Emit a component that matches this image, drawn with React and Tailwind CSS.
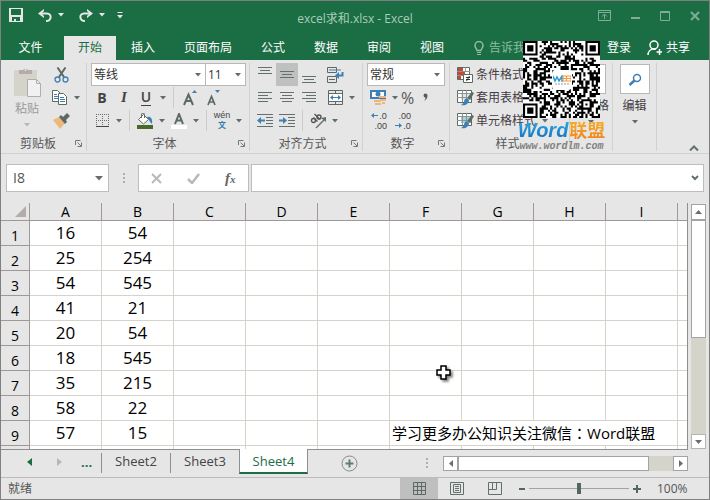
import React, { useState } from 'react';

const columns = ['A', 'B', 'C', 'D', 'E', 'F', 'G', 'H', 'I'];

const rows = [
    [16, 54],
    [25, 254],
    [54, 545],
    [41, 21],
    [20, 54],
    [18, 545],
    [35, 215],
    [58, 22],
    [57, 15],
];

const menuTabs = ['开始', '插入', '页面布局', '公式', '数据', '审阅', '视图'];

const QR_SIZE = 37;

// finder or alignment square: dark ring, light ring, dark core
const ring = (x, y, cx, cy, radius) => {
    const d = Math.max(Math.abs(x - cx), Math.abs(y - cy));
    if (d > radius + 1 || (radius === 2 && d > 2)) return null;
    if (radius === 3) return d === 3 || d <= 1;
    return d === 2 || d === 0;
};

const buildQr = () => {
    let seed = 20165;
    const cells = [];
    for (let y = 0; y < QR_SIZE; y++) {
        for (let x = 0; x < QR_SIZE; x++) {
            seed = (seed * 1103515245 + 12345) % 2147483648;
            const random = seed / 2147483648 > 0.48;
            const fixed = ring(x, y, 3, 3, 3) ?? ring(x, y, 33, 3, 3) ?? ring(x, y, 3, 33, 3) ?? ring(x, y, 30, 30, 2);
            if (fixed ?? random) cells.push(`M${x} ${y}h1v1h-1z`);
        }
    }
    return cells.join('');
};

const qrPath = buildQr();

const Svg = ({ w, h, children, className = '' }) => (
    <svg width={w} height={h} viewBox={`0 0 ${w} ${h}`} fill="none" className={`shrink-0 ${className}`} aria-hidden="true">
        {children}
    </svg>
);

const Caret = ({ className = 'text-[#5f6f68]' }) => (
    <Svg w={6} h={4} className={className}>
        <path d="M0 0h6L3 3.5z" fill="currentColor" />
    </Svg>
);

const Tool = ({ label, className = 'w-[22px]', children }) => (
    <button type="button" aria-label={label} className={`flex h-[23px] shrink-0 items-center justify-center hover:bg-[#cfcfcf] ${className}`}>
        {children}
    </button>
);

const Divider = () => <span className="ml-1 h-[21px] w-px shrink-0 bg-[#cdcdc8]" />;

const Launcher = ({ label }) => (
    <button type="button" aria-label={label}>
        <Svg w={7} h={7}>
            <path d="M0.5 5V0.5H5.5M2.5 2.5L6 6M6.5 2.5V6.5H2.5" stroke="#777" />
        </Svg>
    </button>
);

const Group = ({ title, className, children, launcher = true }) => (
    <section className={`flex shrink-0 flex-col border-r border-[#d2d2cc] ${className}`}>
        <div className="h-[69px]">{children}</div>
        <div className="flex h-[19px] items-center pt-1 pr-1">
            <span className="flex-1 text-center leading-4 text-[#565656]">{title}</span>
            {launcher && <Launcher label={`${title}设置`} />}
        </div>
    </section>
);

const Select = ({ label, className, options }) => (
    <label className={`relative block h-[23px] shrink-0 border border-[#b8b8b8] bg-white ${className}`}>
        <select aria-label={label} className="h-full w-full appearance-none bg-white pl-[2px] text-[12px] leading-4 text-[#333] outline-none">
            {options.map(o => <option key={o}>{o}</option>)}
        </select>
        <span className="pointer-events-none absolute inset-y-0 right-1 flex items-center"><Caret /></span>
    </label>
);

// each line of a 14px paragraph glyph as [x, y, length]
const Lines = ({ rows: list, h = 13 }) => (
    <Svg w={14} h={h}>
        {list.map(([x, y, len]) => <rect key={y} x={x} y={y} width={len} height="1" fill="#62716b" />)}
    </Svg>
);

const Clipboard = () => (
    <Group title="剪贴板" className="w-[86px]">
        <div className="flex pl-2">
            <button type="button" className="flex w-9 flex-col items-center text-[#999]">
                <Svg w={30} h={32} className="mt-1">
                    <path d="M2 3h23v26H2z" fill="#d4d4ca" />
                    <path d="M7 7V3h4a3 3 0 0 1 5 0h4v4z" fill="#b5abab" />
                    <circle cx="13.5" cy="3" r="1" fill="#e6e6e6" />
                    <path d="M15.500 12.500h9l4 4v13h-13z" fill="#f1f1f1" stroke="#b5abab" />
                    <path d="M24.500 12.500v4h4" stroke="#b5abab" />
                </Svg>
                <span className="leading-5">粘贴</span>
                <Caret className="mt-1 text-[#b8b8b8]" />
            </button>
            <div className="pl-1">
                <Tool label="剪切" className="w-6">
                    <Svg w={15} h={16}>
                        <path d="M3.500 0.500L10 10M11.500 0.500L5 10" stroke="#5c6a64" strokeWidth="2" />
                        <circle cx="3.500" cy="12.500" r="2.500" stroke="#3f7fb5" strokeWidth="1.300" />
                        <circle cx="11.500" cy="12.500" r="2.500" stroke="#3f7fb5" strokeWidth="1.300" />
                    </Svg>
                </Tool>
                <Tool label="复制" className="w-8 gap-[6px]">
                    <Svg w={17} h={15}>
                        <path d="M1.500 0.500h5l3 3v8h-8z" fill="#fff" stroke="#5c6a64" />
                        <path d="M3 4.500h3M3 6.500h4M3 8.500h4" stroke="#3f7fb5" />
                        <path d="M7.500 3.500h5l3 3v8h-8z" fill="#fff" stroke="#5c6a64" />
                        <path d="M9 7.500h4M9 9.500h5M9 11.500h5" stroke="#3f7fb5" />
                    </Svg>
                    <Caret />
                </Tool>
                <Tool label="格式刷" className="w-6">
                    <Svg w={17} h={16}>
                        <path d="M0 7l6-3 6 6-5 6z" fill="#eeb878" />
                        <path d="M6 4l2-2 2 2 4-4 3 3-4 4 1 2-2 2z" fill="#5c6a64" />
                    </Svg>
                </Tool>
            </div>
        </div>
    </Group>
);

const FontGroup = () => (
    <Group title="字体" className="w-[163px] pl-1">
        <div className="flex">
            <Select label="字体" className="w-[115px]" options={['等线', '宋体', '黑体']} />
            <Select label="字号" className="-ml-px w-[41px]" options={['11', '12', '14']} />
        </div>
        <div className="flex items-center text-[14px] text-[#444]">
            <Tool label="加粗"><b>B</b></Tool>
            <Tool label="倾斜"><i className="font-['Liberation_Serif'] text-[15px] font-bold">I</i></Tool>
            <Tool label="下划线"><span className="border-b border-[#444] font-semibold leading-4">U</span></Tool>
            <Tool label="下划线样式" className="w-3"><Caret /></Tool>
            <Divider />
            <Tool label="增大字号" className="ml-1 w-6">
                <Svg w={14} h={16}>
                    <path d="M1 15L5.500 4.500L10 15M2.500 11h6" stroke="#5c6a64" strokeWidth="2" />
                    <path d="M9 3h5L11.500 0z" fill="#3f7fb5" />
                </Svg>
            </Tool>
            <Tool label="减小字号">
                <Svg w={13} h={16}>
                    <path d="M1 15L4.500 6.500L8 15M2.500 12h4" stroke="#5c6a64" strokeWidth="1.700" />
                    <path d="M8 0h5l-2.500 3z" fill="#3f7fb5" />
                </Svg>
            </Tool>
        </div>
        <div className="flex items-center">
            <Tool label="边框">
                <Svg w={13} h={13}>
                    <path d="M0 0.500h13M0 6.500h13M0.500 0v13M6.500 0v13M12.500 0v13" stroke="#6e6e6e" strokeDasharray="1 1" />
                    <path d="M0 12.500h13" stroke="#444" />
                </Svg>
            </Tool>
            <Tool label="边框样式" className="w-3"><Caret /></Tool>
            <Divider />
            <Tool label="填充颜色" className="ml-1 w-[22px]">
                <Svg w={16} h={16}>
                    <path d="M1.500 6.500l5-5 5 5-5 4.500z" fill="#fff" stroke="#5c6a64" />
                    <path d="M4.500 5V1.500a1.500 1.500 0 0 1 3 0V5" stroke="#5c6a64" />
                    <path d="M10 4c3-1 6 1 5 7-1-1-2-2-3-4z" fill="#3f7fb5" />
                    <path d="M0 12h16v4H0z" fill="#49682e" />
                </Svg>
            </Tool>
            <Tool label="填充颜色选择" className="w-3"><Caret /></Tool>
            <Tool label="字体颜色">
                <Svg w={16} h={16}>
                    <path d="M4 11L8 1L12 11M5.500 7.500h5" stroke="#5c6a64" strokeWidth="2" />
                    <path d="M0 12h16v4H0z" fill="#fff" />
                </Svg>
            </Tool>
            <Tool label="字体颜色选择" className="w-3"><Caret /></Tool>
            <Divider />
            <Tool label="拼音" className="ml-1 w-[22px] flex-col font-['Liberation_Sans','Noto_Sans_CJK_SC'] text-[9px] text-[#444]">
                <span className="leading-[10px]">wén</span>
                <span className="text-[8px] font-bold leading-[12px] text-[#2f7fb0]">文</span>
            </Tool>
            <Tool label="拼音选项" className="w-3"><Caret /></Tool>
        </div>
    </Group>
);

const AlignGroup = () => (
    <Group title="对齐方式" className="w-[113px] pl-1">
        <div className="flex">
            <Tool label="顶端对齐"><Lines rows={[[0, 1, 14], [2, 4, 10], [0, 7, 14]]} h={18} /></Tool>
            <Tool label="垂直居中" className="w-[22px] bg-[#c0c0c0]"><Lines rows={[[0, 1, 14], [2, 4, 10], [0, 7, 14]]} h={9} /></Tool>
            <Tool label="底端对齐"><Lines rows={[[0, 9, 14], [2, 12, 10], [0, 15, 14]]} h={16} /></Tool>
            <Tool label="自动换行" className="ml-1 w-[22px]">
                <Svg w={17} h={16}>
                    <path d="M0.500 0.500h9v5h-9zM0.500 9.500h9v6h-9zM2 12.500h6" stroke="#5c6a64" />
                    <path d="M2 3h12" stroke="#3f7fb5" />
                    <path d="M15.500 5v3.500H10" stroke="#3f7fb5" strokeWidth="2" />
                    <path d="M12 5v7L8 8.500z" fill="#3f7fb5" />
                </Svg>
            </Tool>
        </div>
        <div className="flex">
            <Tool label="左对齐"><Lines rows={[[0, 1, 14], [0, 4, 10], [0, 7, 14], [0, 10, 10]]} /></Tool>
            <Tool label="居中"><Lines rows={[[0, 1, 14], [2, 4, 10], [0, 7, 14], [2, 10, 10]]} /></Tool>
            <Tool label="右对齐"><Lines rows={[[0, 1, 14], [4, 4, 10], [0, 7, 14], [4, 10, 10]]} /></Tool>
            <Tool label="合并后居中" className="ml-1 w-[22px]">
                <Svg w={15} h={15}>
                    <path d="M0.500 0.500h14v14h-14zM0 3.500h15M0 11.500h15M7.500 0v3M7.500 12v3" stroke="#5c6a64" />
                    <path d="M1 4h13v7H1z" fill="#fff" />
                    <path d="M3 7.500h9" stroke="#3f7fb5" />
                    <path d="M5 5v5L2 7.500zM10 5v5l3-2.500z" fill="#3f7fb5" />
                </Svg>
            </Tool>
            <Tool label="合并选项" className="w-3"><Caret /></Tool>
        </div>
        <div className="flex items-center">
            <Tool label="减少缩进量">
                <Svg w={16} h={13}>
                    <path d="M0 0.500h16M9 3.500h7M9 6.500h7M9 9.500h7M0 12.500h16" stroke="#62716b" />
                    <path d="M3 6.500h5" stroke="#3f7fb5" strokeWidth="2" />
                    <path d="M4 3v7L0 6.500z" fill="#3f7fb5" />
                </Svg>
            </Tool>
            <Tool label="增加缩进量">
                <Svg w={16} h={13}>
                    <path d="M0 0.500h16M9 3.500h7M9 6.500h7M9 9.500h7M0 12.500h16" stroke="#62716b" />
                    <path d="M0 6.500h5" stroke="#3f7fb5" strokeWidth="2" />
                    <path d="M4 3v7l4-3.500z" fill="#3f7fb5" />
                </Svg>
            </Tool>
            <Divider />
            <Tool label="方向" className="ml-1 w-[22px]">
                <Svg w={17} h={16}>
                    <g stroke="#555" strokeWidth="1.400">
                        <circle cx="3.500" cy="7.500" r="2" />
                        <path d="M3.500 4.500l4 4M4.500 1l5.500 5.500" />
                        <circle cx="9" cy="4" r="2" />
                        <path d="M6 15l8-8" stroke="#62716b" />
                    </g>
                    <path d="M16 4v5l-5-4z" fill="#62716b" />
                </Svg>
            </Tool>
            <Tool label="方向选项" className="w-3"><Caret /></Tool>
        </div>
    </Group>
);

const NumberGroup = () => (
    <Group title="数字" className="w-[87px] pl-1">
        <Select label="数字格式" className="w-[78px]" options={['常规', '数值', '货币']} />
        <div className="flex items-center">
            <Tool label="会计数字格式">
                <Svg w={17} h={17}>
                    <path d="M0 1h16v9H0z" fill="#3f7fb5" />
                    <path d="M2 3h12v5H2z" fill="#fff" />
                    <circle cx="8" cy="5" r="2.500" fill="#3f7fb5" />
                    <path d="M9 7h7v2H9zM10 10h6v2h-6zM4 11h7v2H4zM5 14h6v2H5zM12 13h3v2h-3z" fill="#f0b57c" />
                </Svg>
            </Tool>
            <Tool label="货币选项" className="w-3"><Caret /></Tool>
            <Tool label="百分比" className="text-[16px] text-[#555]">%</Tool>
            <Tool label="千位分隔">
                <Svg w={5} h={9}><path d="M0.500 2.500a2 2 0 1 1 4 0c0 2.500-1 4-3.500 5.500 1-1.500 1.500-2.500 1.500-3.500a2 2 0 0 1-2-2z" fill="#5d5763" /></Svg>
            </Tool>
        </div>
        <div className="flex gap-2 pl-1 font-['Liberation_Sans'] text-[9px] leading-[10px] text-[#444]">
            <Tool label="增加小数位" className="w-4 flex-col">
                <span className="flex items-center">
                    <Svg w={8} h={5}><path d="M2 2.500h5" stroke="#3f7fb5" /><path d="M3 0v5L0 2.500z" fill="#3f7fb5" /></Svg>.0
                </span>
                <span className="self-end">.00</span>
            </Tool>
            <Tool label="减少小数位" className="w-4 flex-col">
                <span className="self-end">.00</span>
                <span className="flex items-center">
                    <Svg w={8} h={5}><path d="M0 2.500h5" stroke="#3f7fb5" /><path d="M4 0v5l3-2.500z" fill="#3f7fb5" /></Svg>.0
                </span>
            </Tool>
        </div>
    </Group>
);

const TableIcon = ({ fill }) => (
    <Svg w={17} h={16}>
        <path d="M0.500 0.500h14v12h-14z" fill="#fff" stroke="#5c6a64" />
        <path d="M4 4h10v6H4z" fill={fill} />
        <path d="M0 3.500h15M0 7.500h10M5.500 0v12M9.500 0v8" stroke="#8a9691" />
        <path d="M10 8l5-6 2 1-4 7z" fill="#5c6a64" />
        <path d="M4 15c4 1 8-1 8-5l-2-2c-4 1-2 5-6 7z" fill="#3f7fb5" />
    </Svg>
);

const StylesGroup = () => (
    <Group title="样式" className="w-[120px]" launcher={false}>
        <button type="button" className="flex h-[23px] items-center gap-[3px] pl-[7px]">
            <Svg w={16} h={16}>
                <path d="M0.500 0.500h12v12h-12z" fill="#fff" stroke="#5c6a64" />
                <path d="M1 1h5v3H1zM1 9h3v3H1zM1 5h7v3H1z" fill="#c64a31" />
                <path d="M0 4.500h13M0 8.500h6M8.500 0v5" stroke="#8a9691" />
                <path d="M6.500 7.500h9v8h-9z" fill="#fff" stroke="#5c6a64" />
                <path d="M9 10.500h4M9 12.500h4M12.500 9L9.500 14" stroke="#333" />
            </Svg>
            条件格式
        </button>
        <button type="button" className="flex h-[23px] items-center gap-[2px] pl-[7px]"><TableIcon fill="#e4e4e4" />套用表格</button>
        <button type="button" className="flex h-[23px] items-center gap-[2px] pl-[7px]">
            <TableIcon fill="#a9d0d4" />单元格样式<span className="pl-1"><Caret /></span>
        </button>
    </Group>
);

const BigButton = ({ label, children }) => (
    <button type="button" className="flex w-full flex-col items-center">
        <span className="mt-px flex h-[30px] w-[30px] items-center justify-center border border-[#b8b8b8] bg-white">{children}</span>
        <span className="mt-[2px] leading-5">{label}</span>
        <span className="mt-1"><Caret /></span>
    </button>
);

const Ribbon = () => (
    <div className="flex shrink-0 overflow-hidden border-b border-[#d2d2cc] bg-[#e6e6e6] pt-[3px] pb-[2px] text-[12px] text-[#443c44]">
        <Clipboard />
        <FontGroup />
        <AlignGroup />
        <NumberGroup />
        <StylesGroup />
        <Group title="" className="w-[43px]" launcher={false}>
            <BigButton label="单元格">
                <Svg w={14} h={12}><path d="M0.500 0.500h13v11h-13zM0 4.500h14M5.500 0v12" stroke="#5c6a64" /></Svg>
            </BigButton>
        </Group>
        <Group title="" className="w-[44px]" launcher={false}>
            <BigButton label="编辑">
                <Svg w={14} h={13}>
                    <circle cx="9" cy="5" r="3.500" stroke="#3f7fb5" strokeWidth="1.500" />
                    <path d="M6.500 7.500L1.500 12" stroke="#3f7fb5" strokeWidth="2.500" />
                </Svg>
            </BigButton>
        </Group>
        <div className="flex flex-1 items-end justify-end pr-[10px]">
            <button type="button" aria-label="折叠功能区">
                <Svg w={10} h={6}><path d="M1 5.500L5 1.500L9 5.500" stroke="#62716b" strokeWidth="2" /></Svg>
            </button>
        </div>
    </div>
);

const TitleBar = () => (
    <header className="relative flex h-[35px] shrink-0 items-center justify-between bg-[#1b6e44] pr-[9px] pl-2 text-[#e6e6e6]">
        <div className="flex items-center pb-[7px]">
            <button type="button" aria-label="保存">
                <Svg w={14} h={14}>
                    <path d="M0 0h14v14H0z" fill="#e6e6e6" />
                    <path d="M2 1h10v6H2zM3 9h8v4H3z" fill="#1b6e44" />
                    <path d="M5 11h2v2H5z" fill="#e6e6e6" />
                </Svg>
            </button>
            <button type="button" aria-label="撤消" className="ml-[15px] flex items-center gap-[6px]">
                <Svg w={14} h={13}>
                    <path d="M2 4.500h7c5 0 5 7.500-1 7.500" stroke="currentColor" strokeWidth="2" />
                    <path d="M6 0v2L3.500 4.500L6 7v2L0 4.500z" fill="currentColor" />
                </Svg>
                <Caret className="text-[#e6e6e6]" />
            </button>
            <button type="button" aria-label="恢复" className="ml-[15px] flex items-center gap-[6px]">
                <Svg w={14} h={13}>
                    <path d="M12 4.500H5c-5 0-5 7.500 1 7.500" stroke="currentColor" strokeWidth="2" />
                    <path d="M8 0v2l2.500 2.500L8 7v2l6-4.500z" fill="currentColor" />
                </Svg>
                <Caret className="text-[#e6e6e6]" />
            </button>
            <button type="button" aria-label="自定义快速访问工具栏" className="ml-3">
                <Svg w={6} h={7}><path d="M0.500 0.500h5" stroke="currentColor" /><path d="M0 3h6L3 6.500z" fill="currentColor" /></Svg>
            </button>
        </div>
        <h1 className="pointer-events-none absolute inset-x-0 text-center text-[12px] leading-5 text-[#a9cdb9]">excel求和.xlsx - Excel</h1>
        <div className="flex items-center gap-5 pb-[6px] text-[#7fae94]">
            <button type="button" aria-label="功能区显示选项">
                <Svg w={13} h={11}><path d="M0.500 0.500h12v10h-12zM1 2.500h11M6.500 4v5M4 6.500L6.500 4L9 6.500" stroke="currentColor" /></Svg>
            </button>
            <button type="button" aria-label="最小化"><Svg w={9} h={10}><path d="M0 7h9" stroke="currentColor" strokeWidth="2" /></Svg></button>
            <button type="button" aria-label="最大化"><Svg w={10} h={10}><path d="M0.500 0.500h9v9h-9zM0 1.500h10" stroke="currentColor" /></Svg></button>
            <button type="button" aria-label="关闭"><Svg w={10} h={10}><path d="M1 1l8 8M9 1L1 9" stroke="currentColor" strokeWidth="2" /></Svg></button>
        </div>
    </header>
);

const MenuBar = () => {
    const [active, setActive] = useState('开始');
    return (
        <nav className="flex h-6 shrink-0 items-stretch bg-[#1b6e44] text-[12px] leading-5 whitespace-nowrap text-white">
            <button type="button" className="w-[63px] pr-1">文件</button>
            <div className="flex gap-px">
                {menuTabs.map(tab => (
                    <button
                        key={tab}
                        type="button"
                        onClick={() => setActive(tab)}
                        className={`px-[14px] ${active === tab ? 'bg-[#e6e6e6] text-[#1b6e44]' : ''}`}
                    >
                        {tab}
                    </button>
                ))}
            </div>
            <button type="button" className="ml-4 flex items-center gap-[5px] text-[#8fbda3]">
                <Svg w={10} h={14}>
                    <path d="M3 9.500C3 8 1 7 1 4.500a4 4 0 0 1 8 0C9 7 7 8 7 9.500z" stroke="currentColor" strokeWidth="1.500" />
                    <path d="M3 11.500h4M3 13.500h4" stroke="currentColor" />
                </Svg>
                告诉我
            </button>
            <div className="flex flex-1 items-center justify-end gap-4 pr-[19px]">
                <button type="button">登录</button>
                <button type="button" className="flex items-center gap-1">
                    <Svg w={15} h={16}>
                        <circle cx="7" cy="5" r="4" stroke="currentColor" strokeWidth="1.500" />
                        <path d="M1 15c0-3 2-6 6-6h2M12.500 9v6M9.500 12h6" stroke="currentColor" strokeWidth="1.500" />
                    </Svg>
                    共享
                </button>
            </div>
        </nav>
    );
};

const Dots = () => (
    <Svg w={2} h={11}><path d="M0 0h2v2H0zM0 4h2v2H0zM0 8h2v2H0z" fill="#b5abab" /></Svg>
);

const FormulaBar = () => (
    <div className="flex shrink-0 items-center px-[5px] pt-[10px] pb-[11px]">
        <label className="flex h-7 w-[103px] items-center border border-[#bdbdbd] bg-white pr-[5px]">
            <input aria-label="名称框" defaultValue="I8" className="min-w-0 flex-1 pl-[6px] text-[14px] leading-5 text-[#555] outline-none" />
            <Svg w={8} h={5}><path d="M0 0h8L4 4.500z" fill="#6b6b6b" /></Svg>
        </label>
        <span className="flex w-[29px] justify-center"><Dots /></span>
        <div className="flex h-7 w-[111px] items-center justify-around border border-[#bdbdbd] bg-white">
            <button type="button" aria-label="取消"><Svg w={11} h={11}><path d="M1 1l9 9M10 1l-9 9" stroke="#b9b9b9" strokeWidth="2" /></Svg></button>
            <button type="button" aria-label="输入"><Svg w={13} h={11}><path d="M1 6l4 4 7-9" stroke="#b9b9b9" strokeWidth="2.500" /></Svg></button>
            <button type="button" aria-label="插入函数" className="font-['Liberation_Serif'] text-[15px] leading-5 font-bold text-[#666] italic">
                f<span className="text-[11px]">x</span>
            </button>
        </div>
        <label className="ml-[2px] flex h-7 flex-1 items-center border border-[#bdbdbd] bg-white pr-1">
            <input aria-label="编辑栏" className="min-w-0 flex-1 px-2 text-[14px] outline-none" />
            <Svg w={8} h={6}><path d="M1 1l3 3 3-3" stroke="#62716b" strokeWidth="2" /></Svg>
        </label>
    </div>
);

const Sheet = () => (
    <div className="min-w-0 flex-1 overflow-hidden border-r border-[#8f8f8f]">
        <table className="w-full table-fixed border-separate border-spacing-0 text-center">
            <colgroup>
                <col className="w-[29px]" />
                {columns.map(c => <col key={c} className="w-[72px]" />)}
                <col />
            </colgroup>
            <thead>
                <tr className="h-[18px] bg-[#e6e6e6] text-[14px] leading-4 text-black">
                    <th aria-label="全选" className="border-r border-b border-[#a09898] p-0">
                        <Svg w={11} h={11} className="ml-[14px]"><path d="M11 0v11H0z" fill="#b5abab" /></Svg>
                    </th>
                    {columns.map(c => (
                        <th key={c} scope="col" className="border-r border-b border-[#a09898] p-0 font-normal">{c}</th>
                    ))}
                    <td className="border-b border-[#a09898] p-0" />
                </tr>
            </thead>
            <tbody className="text-[17px] leading-5 text-black">
                {rows.map(([a, b], i) => (
                    <tr key={i} className="h-[25px]">
                        <th scope="row" className="border-r border-b border-[#a09898] bg-[#e6e6e6] p-0 pt-[5px] text-[14px] leading-4 font-normal">{i + 1}</th>
                        <td className="border-r border-b border-[#d4d4ca] p-0">{a}</td>
                        <td className="border-r border-b border-[#d4d4ca] p-0">{b}</td>
                        {columns.slice(2, 5).map(c => <td key={c} className="border-r border-b border-[#d4d4ca] p-0" />)}
                        {i === 8 ? (
                            <td colSpan={4} className="border-r border-b border-[#d4d4ca] p-0 pl-[2px] text-left text-[15px] whitespace-nowrap">
                                学习更多办公知识关注微信<span className="font-['Noto_Sans_CJK_TC']">：</span>Word联盟
                            </td>
                        ) : (
                            columns.slice(5).map(c => <td key={c} className="border-r border-b border-[#d4d4ca] p-0" />)
                        )}
                        <td className="border-b border-[#d4d4ca] p-0" />
                    </tr>
                ))}
                <tr className="h-[25px]">
                    <th className="border-r border-[#a09898] bg-[#e6e6e6] p-0" />
                    {columns.map(c => <td key={c} className="border-r border-[#d4d4ca] p-0" />)}
                    <td className="p-0" />
                </tr>
            </tbody>
        </table>
    </div>
);

const VerticalScroll = () => (
    <div className="mt-px mr-[3px] ml-[3px] flex w-[15px] shrink-0 flex-col bg-[#d4d4ca]">
        <button type="button" aria-label="向上滚动" className="flex h-4 items-center justify-center border border-[#a3a3a8] bg-white">
            <Svg w={7} h={4}><path d="M0 4h7L3.500 0z" fill="#62716b" /></Svg>
        </button>
        <div className="h-[118px] border border-[#a3a3a8] bg-white" />
        <span className="flex-1" />
        <button type="button" aria-label="向下滚动" className="flex h-[15px] items-center justify-center border border-[#b5b5b5] bg-white">
            <Svg w={7} h={4}><path d="M0 0h7L3.500 4z" fill="#62716b" /></Svg>
        </button>
    </div>
);

const SheetTabs = () => (
    <div className="flex h-7 shrink-0 items-start text-[13px] leading-4 text-[#444]">
        <div className="flex h-full flex-1 border-t border-[#8f8f8f]">
            <div className="flex h-6 w-[100px] items-center pl-[26px]">
                <button type="button" aria-label="上一张"><Svg w={5} h={8}><path d="M5 0v8L0 4z" fill="#1b6e44" /></Svg></button>
                <button type="button" aria-label="下一张" className="ml-[25px]"><Svg w={5} h={8}><path d="M0 0v8l5-4z" fill="#b8b8b8" /></Svg></button>
                <button type="button" className="ml-[19px] font-bold text-[#1b6e44]">...</button>
            </div>
            <button type="button" className="mt-[3px] h-5 w-[69px] border-l border-[#8f8f8f] pb-1">Sheet2</button>
            <button type="button" className="mt-[3px] h-5 w-[69px] border-l border-[#8f8f8f] pb-1">Sheet3</button>
            <button type="button" className="-mt-px h-[25px] w-[69px] border-x border-b-2 border-x-[#8f8f8f] border-b-[#1b6e44] bg-white text-[#1b6e44]">Sheet4</button>
            <button type="button" aria-label="新工作表" className="ml-[33px] flex h-[27px] items-center">
                <Svg w={17} h={17}>
                    <circle cx="8.500" cy="8.500" r="7.500" stroke="#8a8a8a" />
                    <path d="M8.500 4.500v8M4.500 8.500h8" stroke="#5f7f6e" strokeWidth="2" />
                </Svg>
            </button>
            <span className="flex h-[27px] flex-1 items-center justify-end pr-[15px]"><Dots /></span>
            <div className="mt-[6px] flex h-[15px] w-[245px] bg-[#d4d4ca]">
                <button type="button" aria-label="向左滚动" className="flex w-[15px] items-center justify-center border border-[#a3a3a3] bg-white">
                    <Svg w={4} h={7}><path d="M4 0v7L0 3.500z" fill="#62716b" /></Svg>
                </button>
                <div className="w-[191px] border border-[#a3a3a3] bg-white" />
                <span className="flex-1" />
                <button type="button" aria-label="向右滚动" className="flex w-[15px] items-center justify-center border border-[#a3a3a3] bg-white">
                    <Svg w={4} h={7}><path d="M0 0v7l4-3.500z" fill="#62716b" /></Svg>
                </button>
            </div>
        </div>
        <span className="w-[21px]" />
    </div>
);

const StatusBar = () => (
    <footer className="flex h-[22px] shrink-0 items-center border-t border-[#bcbcbc] pl-[7px] text-[12px] leading-4 text-[#555]">
        <span className="flex-1">就绪</span>
        <button type="button" aria-label="普通" className="flex h-full w-[38px] items-center justify-center bg-[#bfbfbf]">
            <Svg w={13} h={13}><path d="M0.500 0.500h12v12h-12zM0 4.500h13M0 8.500h13M4.500 0v13M8.500 0v13" stroke="#5c6a64" /></Svg>
        </button>
        <button type="button" aria-label="页面布局" className="flex w-[38px] justify-center">
            <Svg w={14} h={13}><path d="M0.500 0.500h13v12h-13zM3.500 2.500h7v8h-7zM5 4.500h4M5 6.500h4M5 8.500h4" stroke="#62716b" /></Svg>
        </button>
        <button type="button" aria-label="分页预览" className="flex w-[38px] justify-center">
            <Svg w={14} h={13}><path d="M0.500 0.500h13v12h-13zM0.500 7.500h8V0.500M4.500 0v7" stroke="#62716b" /></Svg>
        </button>
        <button type="button" aria-label="缩小" className="ml-[5px]"><Svg w={6} h={8}><path d="M0 4h6" stroke="#52685c" strokeWidth="2" /></Svg></button>
        <input
            type="range"
            aria-label="显示比例"
            defaultValue="50"
            className="mx-1 h-[11px] w-[100px] appearance-none bg-[linear-gradient(#a3a3a3,#a3a3a3)] bg-[length:100%_1px] bg-center bg-no-repeat [&::-webkit-slider-thumb]:h-[11px] [&::-webkit-slider-thumb]:w-1 [&::-webkit-slider-thumb]:appearance-none [&::-webkit-slider-thumb]:bg-[#52685c]"
        />
        <button type="button" aria-label="放大"><Svg w={8} h={8}><path d="M0 4h8M4 0v8" stroke="#52685c" strokeWidth="2" /></Svg></button>
        <span className="w-[68px] pl-4">100%</span>
    </footer>
);

const Watermark = () => (
    <div className="pointer-events-none absolute top-10 right-[103px] flex w-[89px] flex-col items-center">
        <div className="relative flex items-center justify-center">
            <svg width="77" height="77" viewBox="0 0 37 37" className="bg-white" aria-hidden="true">
                <path d={qrPath} fill="#000" />
            </svg>
            <span className="absolute flex h-5 w-5 flex-col items-center justify-center rounded-sm bg-white">
                <Svg w={18} h={8}>
                    <path d="M0 1l2 5 2-4 2 4 3-5v5h1" stroke="#2a9ad6" strokeWidth="1.500" />
                    <path d="M10 1h8v5h-8zM10 3.500h8M13.500 1v5" stroke="#f39a3c" strokeWidth="1.200" />
                </Svg>
                <Svg w={14} h={2}><path d="M0 1h14" stroke="#999" strokeDasharray="2 1" /></Svg>
            </span>
        </div>
        <div className="flex items-center text-[18px] leading-6 font-bold whitespace-nowrap">
            <span className="bg-linear-to-b from-[#2fb4ea] to-[#1668b8] bg-clip-text pr-px font-['Liberation_Sans'] text-[20px] text-transparent italic">Word</span>
            <span className="bg-linear-to-b from-[#f7b52c] to-[#ee7d1a] bg-clip-text text-transparent">联盟</span>
        </div>
        <span className="font-['Liberation_Mono'] text-[10px] leading-[10px] font-bold text-[#808080] italic">www.wordlm.com</span>
    </div>
);

const App = () => (
    <div className="relative flex h-screen flex-col overflow-hidden border border-[#808080] bg-[#e6e6e6] font-['Open_Sans','Noto_Sans_CJK_SC',sans-serif]">
        <TitleBar />
        <MenuBar />
        <Ribbon />
        <FormulaBar />
        <main className="relative flex min-h-0 flex-1">
            <div className="flex min-w-0 flex-1 bg-white"><Sheet /></div>
            <VerticalScroll />
            {/* mouse pointer over the sheet */}
            <svg width="22" height="22" viewBox="0 0 22 22" fill="none" className="absolute top-[162px] left-[435px] drop-shadow-[2px_2px_1px_rgba(0,0,0,0.5)]" aria-hidden="true">
                <path d="M5 1h5v4h4v5h-4v4H5v-4H1V5h4z" fill="#fff" stroke="#000" strokeWidth="1.500" />
            </svg>
        </main>
        <SheetTabs />
        <StatusBar />
        <Watermark />
    </div>
);

export default App;
